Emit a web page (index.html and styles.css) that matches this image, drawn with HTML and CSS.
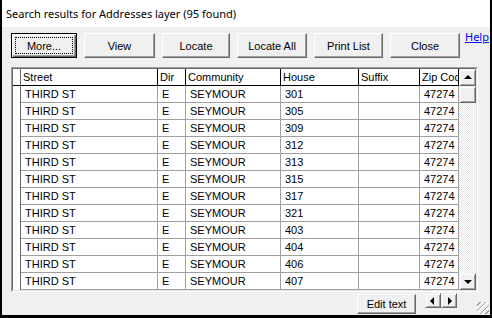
FILE: index.html
```html
<!DOCTYPE html>
<html>
<head>
    <meta charset="UTF-8">
    <title>Search results</title>
    <link rel="stylesheet" href="styles.css">
</head>
<body>
<div class="window">
    <div class="titlebar">Search results for Addresses layer (95 found)</div>

    <div class="toolbar">
        <button class="btn btn-default w-more"><span>More...</span></button>
        <button class="btn w-view">View</button>
        <button class="btn w-locate">Locate</button>
        <button class="btn w-all">Locate All</button>
        <button class="btn w-print">Print List</button>
        <button class="btn w-close">Close</button>
        <a class="help" href="#">Help</a>
    </div>

    <div class="frame">
        <div class="frame-inner">
            <div class="grid">
                <div class="hd ind"></div>
                <div class="hd">Street</div>
                <div class="hd">Dir</div>
                <div class="hd">Community</div>
                <div class="hd">House</div>
                <div class="hd">Suffix</div>
                <div class="hd">Zip Code</div>

                <div class="ind"></div><div class="cell">THIRD ST</div><div class="cell">E</div><div class="cell">SEYMOUR</div><div class="cell">301</div><div class="cell"></div><div class="cell">47274</div>
                <div class="ind"></div><div class="cell">THIRD ST</div><div class="cell">E</div><div class="cell">SEYMOUR</div><div class="cell">305</div><div class="cell"></div><div class="cell">47274</div>
                <div class="ind"></div><div class="cell">THIRD ST</div><div class="cell">E</div><div class="cell">SEYMOUR</div><div class="cell">309</div><div class="cell"></div><div class="cell">47274</div>
                <div class="ind"></div><div class="cell">THIRD ST</div><div class="cell">E</div><div class="cell">SEYMOUR</div><div class="cell">312</div><div class="cell"></div><div class="cell">47274</div>
                <div class="ind"></div><div class="cell">THIRD ST</div><div class="cell">E</div><div class="cell">SEYMOUR</div><div class="cell">313</div><div class="cell"></div><div class="cell">47274</div>
                <div class="ind"></div><div class="cell">THIRD ST</div><div class="cell">E</div><div class="cell">SEYMOUR</div><div class="cell">315</div><div class="cell"></div><div class="cell">47274</div>
                <div class="ind"></div><div class="cell">THIRD ST</div><div class="cell">E</div><div class="cell">SEYMOUR</div><div class="cell">317</div><div class="cell"></div><div class="cell">47274</div>
                <div class="ind"></div><div class="cell">THIRD ST</div><div class="cell">E</div><div class="cell">SEYMOUR</div><div class="cell">321</div><div class="cell"></div><div class="cell">47274</div>
                <div class="ind"></div><div class="cell">THIRD ST</div><div class="cell">E</div><div class="cell">SEYMOUR</div><div class="cell">403</div><div class="cell"></div><div class="cell">47274</div>
                <div class="ind"></div><div class="cell">THIRD ST</div><div class="cell">E</div><div class="cell">SEYMOUR</div><div class="cell">404</div><div class="cell"></div><div class="cell">47274</div>
                <div class="ind"></div><div class="cell">THIRD ST</div><div class="cell">E</div><div class="cell">SEYMOUR</div><div class="cell">406</div><div class="cell"></div><div class="cell">47274</div>
                <div class="ind"></div><div class="cell">THIRD ST</div><div class="cell">E</div><div class="cell">SEYMOUR</div><div class="cell">407</div><div class="cell"></div><div class="cell">47274</div>
            </div>

            <div class="vscroll">
                <div class="sbtn"><em class="tri up"></em></div>
                <div class="thumb"></div>
                <div class="track"></div>
                <div class="sbtn"><em class="tri down"></em></div>
            </div>
        </div>
    </div>

    <div class="bottombar">
        <button class="btn w-edit">Edit text</button>
        <div class="hscroll">
            <div class="sbtn small"><em class="tri left"></em></div>
            <div class="sbtn small"><em class="tri right"></em></div>
        </div>
    </div>

    <div class="grip"></div>
</div>
</body>
</html>
```

FILE: styles.css
```css
* {
    margin: 0;
    padding: 0;
}

body {
    background: #fff;
    font-family: "Liberation Sans", Arial, sans-serif;
    font-size: 11px;
    color: #000;
}

.window {
    position: relative;
    width: 492px;
    height: 318px;
    box-sizing: border-box;
    border-left: 2px solid #000;
    border-right: 2px solid #000;
    border-bottom: 3px solid #000;
    background: #f0f0f0;
    display: flex;
    flex-direction: column;
}

.titlebar {
    height: 27px;
    line-height: 28px;
    padding-left: 4px;
    background: #fff;
    font-family: "Noto Sans", sans-serif;
    font-size: 11px;
}

/*-- toolbar --*/
.toolbar {
    display: flex;
    align-items: flex-start;
    gap: 7px;
    margin-top: 6px;
    padding-left: 9px;
}

.btn {
    position: relative;
    height: 25px;
    box-sizing: border-box;
    background: #f0f0f0;
    border: 1px solid;
    border-color: #fff #696969 #696969 #fff;
    box-shadow: inset -1px -1px #a0a0a0, inset 1px 1px #f0f0f0;
    font-family: "Liberation Sans", Arial, sans-serif;
    font-size: 11px;
    color: #000;
}

.btn-default {
    border-color: #000;
    box-shadow: inset 1px 1px #fff, inset -1px -1px #696969, inset -2px -2px #a0a0a0;
}

.btn-default span::after {
    content: "";
    position: absolute;
    top: 3px;
    left: 3px;
    right: 3px;
    bottom: 3px;
    border: 1px dotted #000;
}

.w-more { width: 66px; }
.w-view { width: 71px; }
.w-locate { width: 68px; }
.w-all { width: 70px; }
.w-print { width: 69px; }
.w-close { width: 70px; }

.help {
    margin-left: -2px;
    margin-top: -4px;
    font-family: "Noto Sans", sans-serif;
    font-size: 11px;
    color: #0000ff;
    text-decoration: underline;
}

/*-- grid --*/
.frame {
    margin: 9px 0 0 9px;
    width: 467px;
    box-sizing: border-box;
    border: 1px solid;
    border-color: #a0a0a0 #fff #fff #a0a0a0;
}

.frame-inner {
    display: flex;
    border: 1px solid;
    border-color: #696969 #e3e3e3 #e3e3e3 #696969;
    background: #fff;
}

.grid {
    display: grid;
    grid-template-columns: 8px 137px 28px 95px 78px 61px 39px;
    grid-auto-rows: 17px;
    width: 446px;
}

.grid div {
    box-sizing: border-box;
    overflow: hidden;
    white-space: nowrap;
    line-height: 16px;
    background: #fff;
}

.hd {
    padding-left: 2px;
    border-right: 1px solid #000;
    border-bottom: 1px solid #000;
}

.cell {
    padding-left: 4px;
    border-right: 1px solid #a0a0a0;
    border-bottom: 1px solid #a0a0a0;
}

.ind {
    border-right: 1px solid #696969;
}

.grid .hd.ind {
    padding: 0;
}

/*-- scroll bars --*/
.vscroll {
    width: 17px;
    display: flex;
    flex-direction: column;
}

.sbtn,
.thumb {
    position: relative;
    height: 17px;
    box-sizing: border-box;
    background: #f0f0f0;
    border: 1px solid;
    border-color: #f0f0f0 #696969 #696969 #f0f0f0;
    box-shadow: inset 1px 1px #fff, inset -1px -1px #a0a0a0;
}

.track {
    flex: 1;
    background-image: conic-gradient(#fff 25%, #e6e6e6 0 50%, #fff 0 75%, #e6e6e6 0);
    background-size: 2px 2px;
}

.tri {
    position: absolute;
    top: 50%;
    left: 50%;
    width: 0;
    height: 0;
    border-style: solid;
    border-color: transparent;
}

.tri.up {
    margin: -3px 0 0 -4px;
    border-width: 0 4px 4px 4px;
    border-bottom-color: #000;
}

.tri.down {
    margin: -2px 0 0 -4px;
    border-width: 4px 4px 0 4px;
    border-top-color: #000;
}

.tri.left {
    margin: -4px 0 0 -3px;
    border-width: 4px 4px 4px 0;
    border-right-color: #000;
}

.tri.right {
    margin: -4px 0 0 -1px;
    border-width: 4px 0 4px 4px;
    border-left-color: #000;
}

/*-- bottom bar --*/
.bottombar {
    display: flex;
    align-items: flex-start;
    justify-content: flex-end;
    gap: 9px;
    margin-top: 1px;
    padding-right: 33px;
}

.w-edit {
    width: 59px;
    height: 20px;
    margin-top: 1px;
}

.hscroll {
    display: flex;
}

.sbtn.small {
    width: 16px;
    height: 15px;
}

.grip {
    position: absolute;
    right: 1px;
    bottom: 1px;
    width: 12px;
    height: 12px;
    background: repeating-linear-gradient(135deg, transparent 0 2px, #a0a0a0 2px 3px, #fff 3px 4px);
}
```
